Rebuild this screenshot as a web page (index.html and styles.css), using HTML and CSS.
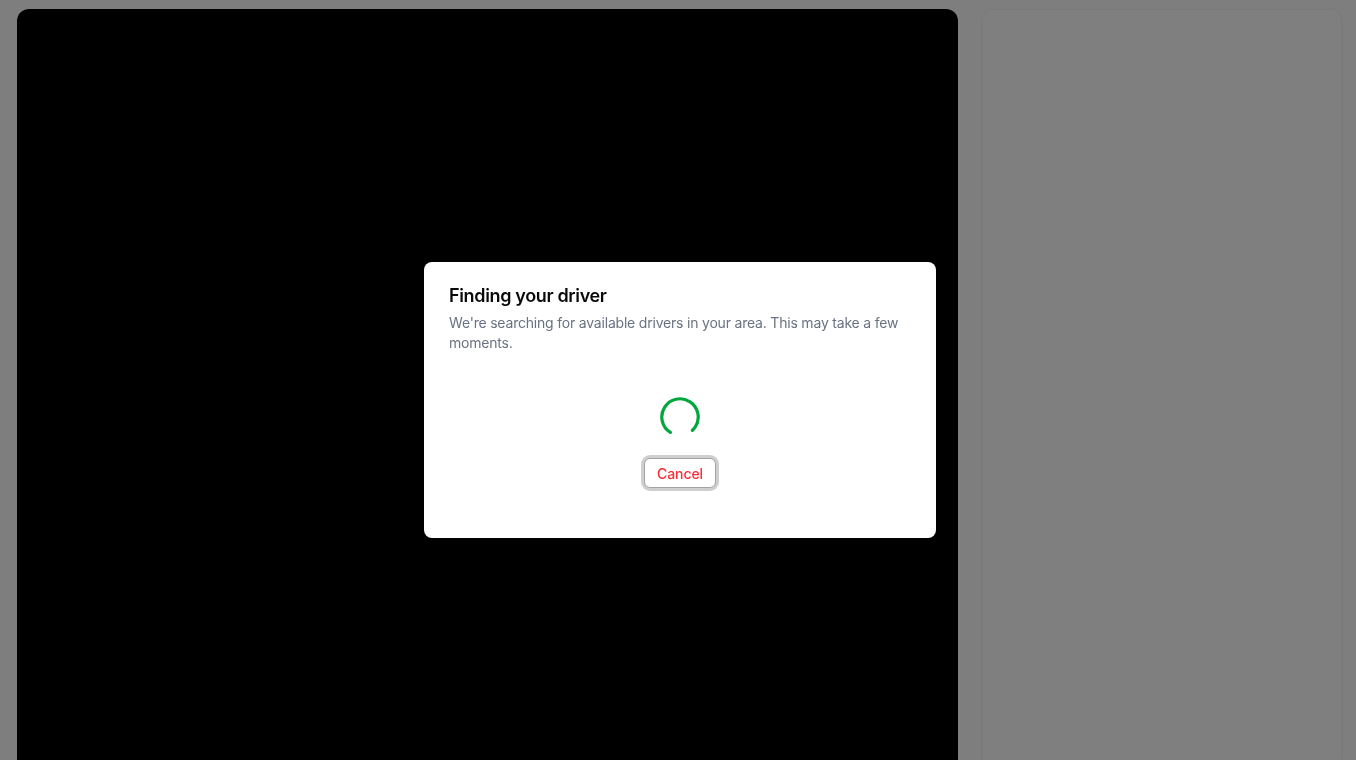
FILE: index.html
```html
<!DOCTYPE html>
<html lang="en">
<head>
<meta charset="utf-8">
<title>Finding your driver</title>
<link rel="stylesheet" href="styles.css">
</head>
<body>
<div class="page">
  <main class="map"></main>
  <aside class="side-card"></aside>
</div>
<div class="overlay"></div>
<div class="dialog" role="dialog" aria-labelledby="dlg-title">
  <div class="dialog-header">
    <h2 id="dlg-title" class="dialog-title">Finding your driver</h2>
    <p class="dialog-desc">We're searching for available drivers in your area. This may take a few moments.</p>
  </div>
  <div class="dialog-body">
    <svg class="spinner" width="40" height="40" viewBox="0 0 40 40" aria-hidden="true">
      <circle cx="20" cy="20" r="18.2" fill="none" stroke="#00a63e" stroke-width="3.2" stroke-linecap="round" stroke-dasharray="90 24.4" transform="rotate(122 20 20)"/>
    </svg>
    <button class="btn-cancel" type="button">Cancel</button>
  </div>
</div>
</body>
</html>
```

FILE: styles.css
```css
* { box-sizing: border-box; }
html, body { margin: 0; height: 100%; }
body {
  background: #fcfcfc;
  font-family: Inter, "Noto Sans", sans-serif;
  overflow: hidden;
}
.page {
  display: flex;
  gap: 24px;
  padding: 9px 14px 0 17px;
  height: 760px;
}
.map {
  flex: 1;
  background: #000;
  border-radius: 12px 12px 0 0;
}
.side-card {
  width: 360px;
  flex: none;
  background: #fff;
  border-radius: 12px 12px 0 0;
  border: 1px solid #f5f5f5;
  border-bottom: none;
  box-shadow: 0 1px 3px rgba(0,0,0,0.06);
}
.overlay {
  position: fixed;
  inset: 0;
  background: rgba(0,0,0,0.5);
}
.dialog {
  position: fixed;
  left: 424px;
  top: 262px;
  width: 512px;
  background: #fff;
  border-radius: 8px;
  padding: 25px 24px 24px 25px;
  display: flex;
  flex-direction: column;
  gap: 16px;
  box-shadow: 0 10px 15px -3px rgba(0,0,0,0.1), 0 4px 6px -4px rgba(0,0,0,0.1);
}
.dialog-header {
  display: flex;
  flex-direction: column;
  gap: 8px;
}
.dialog-title {
  margin: 0;
  font-size: 18px;
  line-height: 18px;
  font-weight: 600;
  letter-spacing: -0.35px;
  color: #0a0a0a;
}
.dialog-desc {
  margin: 0;
  font-size: 14px;
  line-height: 20px;
  letter-spacing: -0.2px;
  color: #6a7282;
}
.dialog-body {
  display: flex;
  flex-direction: column;
  align-items: center;
  gap: 21px;
  padding: 28px 0 26px;
}
.spinner { display: block; margin-left: -1px; }
.btn-cancel {
  height: 30px;
  padding: 0 12px;
  margin-left: -1px;
  background: #fff;
  color: #fb2c36;
  font-family: Inter, "Noto Sans", sans-serif;
  font-size: 14px;
  font-weight: 500;
  letter-spacing: -0.1px;
  border: 1px solid #a3a3a3;
  border-radius: 6px;
  box-shadow: 0 0 0 3px #cfcfcf;
  cursor: pointer;
}
```
